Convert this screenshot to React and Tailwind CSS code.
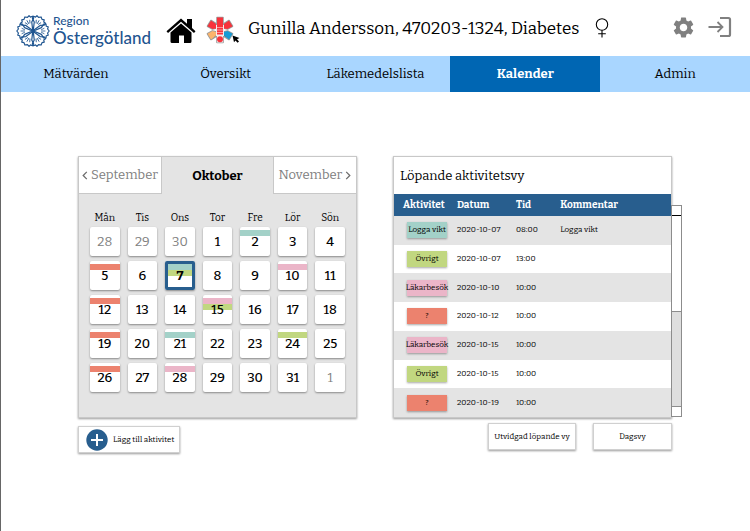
import React from "react";
import { MdSettings } from "react-icons/md";

const serif = "font-['Bitter','DejaVu_Serif',serif]";

const navItems = ["Mätvärden", "Översikt", "Läkemedelslista", "Kalender", "Admin"];
const weekdays = ["Mån", "Tis", "Ons", "Tor", "Fre", "Lör", "Sön"];

const RED = "bg-[#ec826e]";
const TEAL = "bg-[#a3d1c8]";
const GREEN = "bg-[#c1d780]";
const PINK = "bg-[#ebb5c8]";

const marks = {
  2: [TEAL],
  5: [RED],
  7: [TEAL, GREEN],
  10: [PINK],
  12: [RED],
  15: [PINK, GREEN],
  19: [RED],
  21: [TEAL],
  24: [GREEN],
  26: [RED],
  28: [PINK],
};

const days = [
  ...[28, 29, 30].map((n) => ({ n, outside: true })),
  ...Array.from({ length: 31 }, (_, i) => ({ n: i + 1, outside: false })),
  { n: 1, outside: true },
];

const activities = [
  ["Logga vikt", TEAL, "2020-10-07", "08:00", "Logga vikt"],
  ["Övrigt", GREEN, "2020-10-07", "13:00", ""],
  ["Läkarbesök", PINK, "2020-10-10", "10:00", ""],
  ["?", RED, "2020-10-12", "10:00", ""],
  ["Läkarbesök", PINK, "2020-10-15", "10:00", ""],
  ["Övrigt", GREEN, "2020-10-15", "10:00", ""],
  ["?", RED, "2020-10-19", "10:00", ""],
];

const petalAngles = [30, 90, 150, 210, 270, 330];

function FlowerLogo() {
  return (
    <svg viewBox="0 0 34 34" className="size-[34px] shrink-0" fill="none" stroke="#1f5590" strokeWidth="1.2" strokeLinejoin="round" strokeLinecap="round" aria-hidden="true">
      {petalAngles.map((a) => (
        <g key={a} transform={`rotate(${a} 17 17)`}>
          <path d="M17 16.5 L13.6 8.6 L10.2 6.4 L10 4 L12.2 3.8 L12.8 1.8 L15 2.4 L17 0.8 L19 2.4 L21.2 1.8 L21.8 3.8 L24 4 L23.8 6.4 L20.4 8.6 Z" />
          <path d="M17 8.5 V5 M15.6 8.5 L14.4 6 M18.4 8.5 L19.6 6" strokeWidth="0.8" />
        </g>
      ))}
    </svg>
  );
}

function House() {
  return (
    <svg viewBox="0 0 30 26" className="h-[26px] w-[30px]" aria-hidden="true">
      <path d="M15 0.5 L21 5.7 V1 H26 V10 L29.5 13.2 L28 15 L15 3.8 L2 15 L0.5 13.2 Z" />
      <path d="M15 5.5 L25.5 14.6 V23.5 Q25.5 25 24 25 H18 V17.5 H13 V25 H6 Q4.5 25 4.5 23.5 V14.6 Z" />
    </svg>
  );
}

function CareStar() {
  return (
    <svg viewBox="0 0 34 28" className="h-[28px] w-[34px]" aria-hidden="true">
      <g stroke="#9a9a9a" strokeWidth="1.6" strokeLinejoin="round">
        <path d="M5 4.5 L10.5 8 V12 L6.5 13 L1.5 10.2 Z M23 4.5 L17.5 8 V12 L21.5 13 L26.5 10.2 Z" />
        <path d="M1.5 17.8 L6.5 15 L10.5 16 V20 L5 23.5 Z M26.5 17.8 L21.5 15 L17.5 16 V20 L23 23.5 Z" />
        <path d="M11 1.5 H17 V26.5 H11 Z" />
      </g>
      <path d="M5 4.5 L10 8 V12.5 L6.5 13 L1.5 10.2 Z M23 4.5 L18 8 V12.5 L21.5 13 L26.5 10.2 Z" fill="#f8333c" />
      <path d="M1.5 17.8 L6.5 15 L10 16 V19.5 L5 23.5 Z" fill="#fbb46c" />
      <path d="M26.5 17.8 L21.5 15 L18 16 V19.5 L23 23.5 Z" fill="#169bd5" />
      <path d="M10 9 H18 V20 H17 V26.5 H11 V20 H10 Z" fill="#f4eeee" />
      <path d="M11 1.5 H17 V18.5 H11 Z" fill="#f8333c" />
      <path d="M11 11.5 H17 M11 14 H17 M11 16.5 H17" stroke="#ffb0b0" strokeWidth="0.8" />
      <circle cx="14" cy="23.2" r="3" fill="#f8333c" />
      <path d="M26.5 19.5 L33.5 22 L31 23.2 L33 25.4 L31.6 26.7 L29.5 24.5 L28 26.3 Z" fill="#000" />
    </svg>
  );
}

function Chevron({ left }) {
  return (
    <svg viewBox="0 0 6 10" className="h-[9px] w-[6px] shrink-0" fill="none" stroke="#6b6b6b" strokeWidth="1.4" aria-hidden="true">
      <path d={left ? "M5 1 L1 5 L5 9" : "M1 1 L5 5 L1 9"} />
    </svg>
  );
}

function Header() {
  return (
    <header className="flex h-14 items-center pr-[18px] pl-[15px]">
      <a href="#region" className="flex items-center gap-[3px] pt-1.5 font-['Lato',sans-serif] text-[#1f5590]">
        <FlowerLogo />
        <span className="flex w-[101px] flex-col font-medium">
          <span className="text-[12px] leading-[14px]">Region</span>
          <span className="text-[17px] leading-[20px]">Östergötland</span>
        </span>
      </a>
      <a href="#hem" aria-label="Hem" className="ml-3 pt-1.5"><House /></a>
      <a href="#vard" aria-label="Vård" className="ml-2.5 pt-1"><CareStar /></a>
      <h1 className="ml-2 pt-0.5 text-[17px] whitespace-nowrap">Gunilla Andersson, 470203-1324, Diabetes</h1>
      <svg viewBox="0 0 14 20" className="ml-4 h-5 w-3.5 shrink-0" fill="none" stroke="#000" strokeWidth="1.1" aria-label="Kvinna">
        <circle cx="7" cy="6.5" r="5.7" />
        <path d="M7 12.2 V19.5 M3.2 15.8 H10.8" />
      </svg>
      <div className="ml-auto flex items-center gap-3 pb-0.5 text-[#808080]">
        <button type="button" aria-label="Inställningar"><MdSettings className="size-[25px]" /></button>
        <button type="button" aria-label="Logga ut">
          <svg viewBox="0 0 24 22" className="h-[22px] w-6" fill="none" stroke="currentColor" strokeWidth="2.2" aria-hidden="true">
            <path d="M12 2 H20.5 Q22 2 22 3.5 V18.5 Q22 20 20.5 20 H12" />
            <path d="M0.5 11 H14 M9.5 6 L14.5 11 L9.5 16" strokeWidth="1.8" />
          </svg>
        </button>
      </div>
    </header>
  );
}

function DayCell({ n, outside }) {
  const selected = !outside && n === 7;
  const stripes = outside ? [] : marks[n] || [];
  return (
    <button
      type="button"
      aria-pressed={selected}
      className={`relative h-[29px] rounded-[2px] bg-white text-center text-[13px] leading-[29px] shadow-[0_1px_2px_rgba(0,0,0,0.4)] ${
        outside ? "text-[#808080]" : selected ? "font-bold" : "font-medium"
      }`}
    >
      <span className="absolute inset-x-0 top-[3px] flex flex-col">
        {stripes.map((c) => (
          <span key={c} className={`h-1.5 ${c}`} />
        ))}
      </span>
      {selected && <span className="absolute inset-0 rounded-[2px] border-3 border-[#285e8e]" />}
      <span className="relative">{n}</span>
    </button>
  );
}

function Calendar() {
  return (
    <section className="border border-[#c8c8c8] bg-[#e4e4e4] pb-6 shadow-[0_1px_2px_rgba(0,0,0,0.4)]">
      <div className="grid h-[37px] grid-cols-[3fr_4fr_3fr] text-[13px]">
        <button type="button" className="flex items-center justify-center gap-[3px] border-r border-b border-[#c8c8c8] bg-white whitespace-nowrap text-[#808080]">
          <Chevron left />September
        </button>
        <h2 className="flex items-center justify-center font-bold">Oktober</h2>
        <button type="button" className="flex items-center justify-center gap-[3px] border-b border-l border-[#c8c8c8] bg-white whitespace-nowrap text-[#808080]">
          November<Chevron />
        </button>
      </div>
      <div className="mt-4 grid grid-cols-7 gap-x-2 px-[11px] text-center text-[10px] leading-4">
        {weekdays.map((d) => <span key={d}>{d}</span>)}
      </div>
      <div className="mt-px grid grid-cols-7 gap-x-2 gap-y-[5px] px-[11px]">
        {days.map((d, i) => <DayCell key={i} {...d} />)}
      </div>
    </section>
  );
}

function ActivityView() {
  return (
    <section className="relative border border-[#c8c8c8] bg-white shadow-[0_1px_2px_rgba(0,0,0,0.4)]">
      <h2 className="flex h-[37px] items-center pl-1.5 text-[13px]">Löpande aktivitetsvy</h2>
      <table className="h-[223px] w-full table-fixed border-collapse text-left">
        <colgroup>
          <col className="w-[22%]" />
          <col className="w-[22%]" />
          <col className="w-[16%]" />
          <col className="w-[40%]" />
        </colgroup>
        <thead>
          <tr className="h-[22px] bg-[#285e8e] text-[10px] text-white">
            <th scope="col" className="pl-[9px] font-bold">Aktivitet</th>
            <th scope="col" className="pl-0.5 font-bold">Datum</th>
            <th scope="col" className="font-bold">Tid</th>
            <th scope="col" className="font-bold">Kommentar</th>
          </tr>
        </thead>
        <tbody className="text-[8px] leading-[10px] font-normal">
          {activities.map(([name, color, date, time, note], i) => (
            <tr key={i} className="odd:bg-[#e4e4e4]">
              <td className="pl-[13px]">
                <span className={`flex h-4 w-10 items-center justify-center whitespace-nowrap shadow-[0_1px_2px_rgba(0,0,0,0.35)] ${color}`}>{name}</span>
              </td>
              <td className="pl-0.5">{date}</td>
              <td>{time}</td>
              <td>{note}</td>
            </tr>
          ))}
        </tbody>
      </table>
      <div className="absolute top-12 -right-[11px] bottom-0 flex w-[11px] flex-col border border-[#8c8c8c] bg-white" aria-hidden="true">
        <span className="h-2.5 border-b border-black" />
        <span className="flex-1" />
        <span className="h-24 border-y border-[#8c8c8c] bg-[#dedede]" />
        <span className="h-[9px]" />
      </div>
    </section>
  );
}

const boxButton = "border border-[#d0d0d0] bg-white text-[8px] whitespace-nowrap shadow-[0_1px_2px_rgba(0,0,0,0.4)]";

export default function App() {
  return (
    <div className={`min-h-screen border-l border-[#666] bg-white text-black ${serif}`}>
      <Header />
      <nav className="grid h-9 grid-cols-5 text-[13px]">
        {navItems.map((item) => (
          <a
            key={item}
            href={`#${item}`}
            className={`flex items-center justify-center ${item === "Kalender" ? "bg-[#0066b3] font-bold text-white" : "bg-[#a9d6ff]"}`}
          >
            {item}
          </a>
        ))}
      </nav>
      <main className="grid grid-cols-2 gap-x-9 pt-16 pr-[78px] pl-[77px]">
        <Calendar />
        <ActivityView />
        <div className="pt-2">
          <button type="button" className={`flex h-[27px] w-[102px] items-center gap-[5px] pl-[7px] ${boxButton}`}>
            <svg viewBox="0 0 22 22" className="size-[22px] shrink-0" aria-hidden="true">
              <circle cx="11" cy="11" r="10.7" fill="#285e8e" />
              <path d="M11 5 V17 M5 11 H17" stroke="#fff" strokeWidth="2" />
            </svg>
            Lägg till aktivitet
          </button>
        </div>
        <div className="flex justify-end gap-[17px] pt-[5px]">
          <button type="button" className={`h-[27px] w-[88px] ${boxButton}`}>Utvidgad löpande vy</button>
          <button type="button" className={`h-[27px] w-[79px] ${boxButton}`}>Dagsvy</button>
        </div>
      </main>
    </div>
  );
}
